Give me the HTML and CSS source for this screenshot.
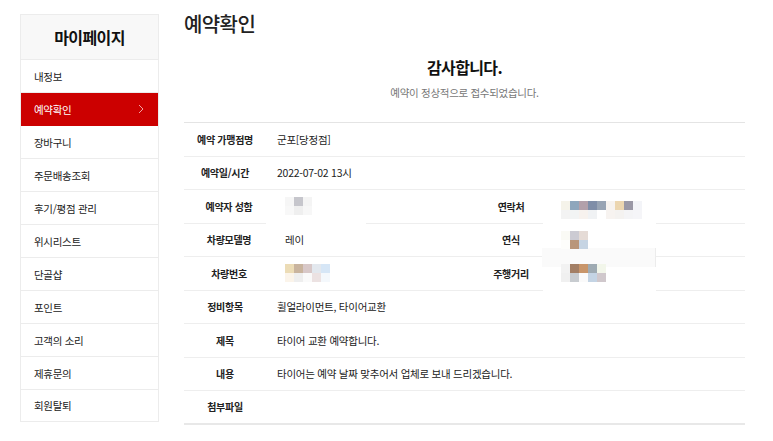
FILE: index.html
```html
<!DOCTYPE html>
<html lang="ko">
<head>
<meta charset="utf-8">
<title>예약확인</title>
<link rel="stylesheet" href="styles.css">
</head>
<body>
<div class="page">
  <aside class="side">
    <div class="side-head">마이페이지</div>
    <ul class="side-menu">
      <li>내정보</li>
      <li class="active">예약확인<svg class="chev" viewBox="0 0 6 10" width="6" height="10"><path d="M1 1 L5 5 L1 9" fill="none" stroke="#f3a3a3" stroke-width="1"/></svg></li>
      <li>장바구니</li>
      <li>주문배송조회</li>
      <li>후기/평점 관리</li>
      <li>위시리스트</li>
      <li>단골샵</li>
      <li>포인트</li>
      <li>고객의 소리</li>
      <li>제휴문의</li>
      <li>회원탈퇴</li>
    </ul>
  </aside>
  <main class="main">
    <h1 class="title">예약확인</h1>
    <div class="thanks">
      <h2>감사합니다.</h2>
      <p>예약이 정상적으로 접수되었습니다.</p>
    </div>
    <div class="table">
      <div class="patch patch-left"></div>
      <div class="patch patch-right"></div>
      <div class="patch-faint"></div>
      <div class="row full"><div class="th">예약 가맹점명</div><div class="td">군포[당정점]</div></div>
      <div class="row full"><div class="th">예약일/시간</div><div class="td">2022-07-02 13시</div></div>
      <div class="row quad">
        <div class="th">예약자 성함</div>
        <div class="td"><div class="mosaic m3">
          <i class="c-f6"></i><i class="c-g1"></i><i class="c-f4"></i>
          <i class="c-f8"></i><i class="c-ef"></i><i class="c-f7"></i>
        </div></div>
        <div class="th">연락처</div>
        <div class="td td2"><div class="mosaic m9 up">
          <i style="background:#f5f3ea"></i><i style="background:#8ea6bc"></i><i style="background:#b2a0aa"></i><i style="background:#7f8ea8"></i><i style="background:#98a4b4"></i><i style="background:#f7f3f0"></i><i style="background:#ecd6b0"></i><i style="background:#9a98a6"></i><i style="background:#f3f4f8"></i>
          <i style="background:#f3f3f3"></i><i style="background:#f2f4f4"></i><i style="background:#f7f2ee"></i><i style="background:#f0f2f4"></i><i style="background:#ffffff"></i><i style="background:#f7f3f0"></i><i style="background:#f4f2f0"></i><i style="background:#f4f4f6"></i><i style="background:#f5f5f8"></i>
        </div></div>
      </div>
      <div class="row quad">
        <div class="th">차량모델명</div>
        <div class="td">레이</div>
        <div class="th">연식</div>
        <div class="td td2"><div class="mosaic m3">
          <i style="background:#fafaf5"></i><i style="background:#cccbd3"></i><i style="background:#e5dbd6"></i>
          <i style="background:#fdfdfb"></i><i style="background:#b9967a"></i><i style="background:#c6d4e3"></i>
        </div></div>
      </div>
      <div class="row quad">
        <div class="th">차량번호</div>
        <div class="td"><div class="mosaic m5">
          <i style="background:#ecdcb6"></i><i style="background:#c9b49e"></i><i style="background:#d8c8c8"></i><i style="background:#e3e8ee"></i><i style="background:#d6e6f6"></i>
          <i style="background:#fbf4ea"></i><i style="background:#eeeeee"></i><i style="background:#fafafa"></i><i style="background:#ece2e2"></i><i style="background:#f4f8fc"></i>
        </div></div>
        <div class="th">주행거리</div>
        <div class="td td2"><div class="mosaic m5">
          <i style="background:#f2f2f2"></i><i style="background:#a37f65"></i><i style="background:#c8956a"></i><i style="background:#9eaab2"></i><i style="background:#f2f6ea"></i>
          <i style="background:#f0f0f0"></i><i style="background:#c8ccd0"></i><i style="background:#fafafa"></i><i style="background:#c4d4e4"></i><i style="background:#d0c8cc"></i>
        </div></div>
      </div>
      <div class="row full"><div class="th">정비항목</div><div class="td">휠얼라이먼트, 타이어교환</div></div>
      <div class="row full"><div class="th">제목</div><div class="td">타이어 교환 예약합니다.</div></div>
      <div class="row full"><div class="th">내용</div><div class="td">타이어는 예약 날짜 맞추어서 업체로 보내 드리겠습니다.</div></div>
      <div class="row full last"><div class="th">첨부파일</div><div class="td"></div></div>
    </div>
  </main>
</div>
</body>
</html>
```
FILE: styles.css
```css
* { box-sizing: border-box; }
html, body { margin: 0; padding: 0; background: #fff; }
body {
  font-family: "Noto Sans CJK KR", "Noto Sans", sans-serif;
  color: #222;
  font-size: 10px;
  letter-spacing: -0.3px;
}
.page {
  display: flex;
  align-items: flex-start;
  padding: 14px 0 0 20px;
}
.side {
  width: 139px;
  border: 1px solid #ececec;
  flex: none;
}
.side-head {
  height: 45px;
  background: #f8f8f8;
  border-bottom: 1px solid #ececec;
  display: flex;
  align-items: center;
  justify-content: center;
  font-size: 16px;
  font-weight: 700;
  letter-spacing: -0.6px;
  color: #111;
}
.side-menu {
  list-style: none;
  margin: 0;
  padding: 0;
}
.side-menu li {
  height: 33px;
  border-bottom: 1px solid #ececec;
  display: flex;
  align-items: center;
  justify-content: space-between;
  padding: 0 14px 0 13px;
  font-size: 10.5px;
  color: #222;
}
.side-menu li:last-child { border-bottom: 0; height: 31px; }
.side-menu li.active {
  background: #cc0000;
  color: #fff;
  border-bottom-color: #cc0000;
}
.chev { display: block; }
.main {
  width: 561px;
  margin-left: 25px;
}
.title {
  margin: 0;
  font-size: 20px;
  line-height: 20px;
  font-weight: 500;
  letter-spacing: -0.6px;
  color: #222;
}
.thanks {
  text-align: center;
  padding: 23px 0 22px;
}
.thanks h2 {
  margin: 0;
  font-size: 16px;
  line-height: 20px;
  font-weight: 700;
  letter-spacing: -0.6px;
  color: #111;
}
.thanks p {
  margin: 9px 0 0;
  font-size: 10.5px;
  line-height: 14px;
  color: #777;
}
.table {
  position: relative;
  border-top: 1px solid #e4e4e4;
}
.row {
  display: grid;
  height: 33.5px;
  border-bottom: 1px solid #eeeeee;
  align-items: center;
}
.row.last { border-bottom: 2px solid #e8e8e8; }
.row.full { grid-template-columns: 82px 1fr; }
.row.quad { grid-template-columns: 90px 192px 90px 1fr; }
.th {
  text-align: center;
  font-weight: 700;
  color: #222;
  font-size: 10px;
}
.td {
  padding-left: 11px;
  font-size: 10.5px;
  letter-spacing: -0.25px;
  color: #222;
  display: flex;
  align-items: center;
}
.td.td2 { padding-left: 5px; }
.mosaic {
  display: grid;
  grid-auto-rows: 9px;
  position: relative;
  z-index: 2;
}
.mosaic.up { margin-top: 8px; }
.mosaic i { display: block; }
.m3 { grid-template-columns: repeat(3, 9px); }
.m5 { grid-template-columns: repeat(5, 9px); }
.m9 { grid-template-columns: repeat(9, 9px); }
.c-f6 { background: #f6f6f6; }
.c-g1 { background: #c6c6cc; }
.c-f4 { background: #f4f4f4; }
.c-f8 { background: #f8f8f8; }
.c-ef { background: #efefef; }
.c-f7 { background: #f7f7f7; }
.patch {
  position: absolute;
  background: #fff;
  z-index: 1;
}
.patch-left {
  left: 82px;
  top: 96px;
  width: 100px;
  height: 8px;
}
.patch-right {
  left: 359px;
  top: 96px;
  width: 113px;
  height: 76px;
}
.patch-faint {
  position: absolute;
  z-index: 1;
  left: 358px;
  top: 125px;
  width: 114px;
  height: 19px;
  background: #fafafa;
  border-right: 1px solid #ececec;
}
```
